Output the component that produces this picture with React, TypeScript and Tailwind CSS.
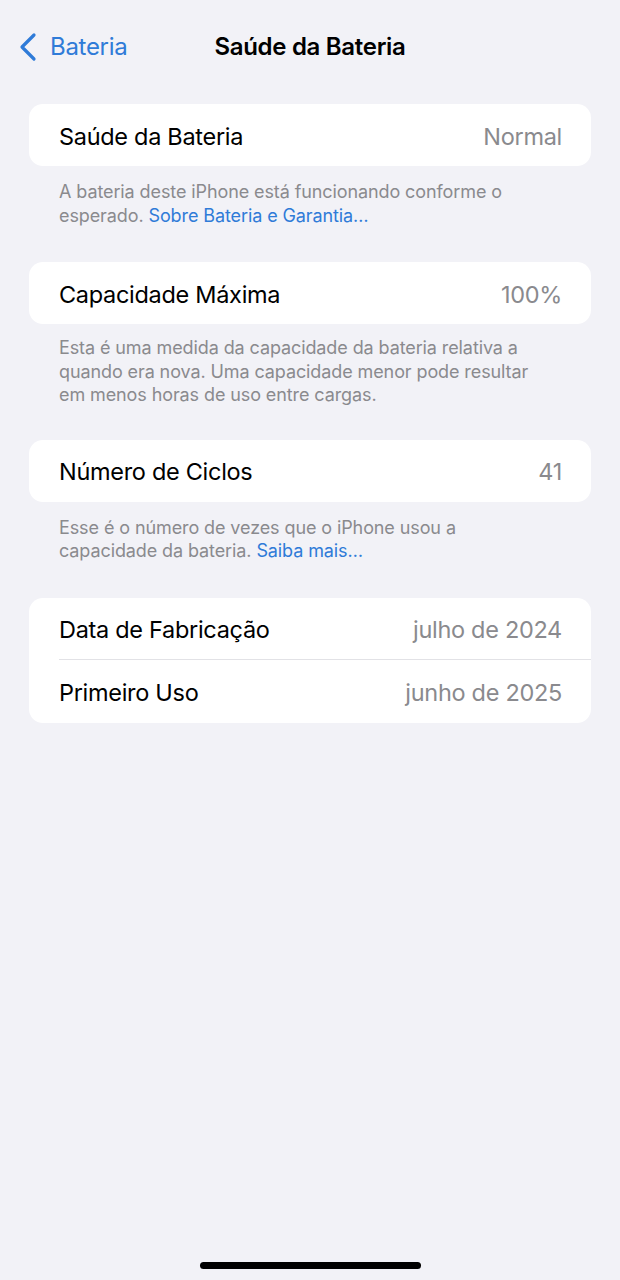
import React from "react";

const font = { fontFamily: "Inter, 'Noto Sans', 'Liberation Sans', sans-serif" };

function Row({ label, value, divider }: { label: string; value: string; divider?: boolean }) {
  return (
    <div className="relative flex h-[62px] items-center justify-between pl-[30px] pr-[29px] pt-[3px]">
      <span className="text-[23.5px] text-black tracking-[-0.3px]">{label}</span>
      <span className="text-[23.5px] text-[#8a8a8e] tracking-[-0.3px]">{value}</span>
      {divider && <div className="absolute bottom-0 left-[30px] right-0 h-px bg-[#e2e2e6]" />}
    </div>
  );
}

function Footer({ children, className }: { children: React.ReactNode; className: string }) {
  return (
    <p className={`pl-[30px] pr-[44px] text-[18px] leading-[23.5px] text-[#8a8a8e] tracking-[-0.1px] ${className}`}>
      {children}
    </p>
  );
}

export default function App() {
  return (
    <div className="relative flex h-[1280px] w-[620px] flex-col bg-[#f2f2f7]" style={font}>
      <div className="relative flex h-[94px] items-center">
        <div className="flex items-center pl-[18px] text-[#2f7bd8]">
          <svg width="20" height="30" viewBox="0 0 20 30" fill="none">
            <path d="M16 3 L4 15 L16 27" stroke="#2f7bd8" strokeWidth="3.2" strokeLinecap="round" strokeLinejoin="round" />
          </svg>
          <span className="ml-[12px] text-[24px] tracking-[-0.3px]">Bateria</span>
        </div>
        <div className="absolute left-0 right-0 text-center text-[24px] font-semibold text-black tracking-[-0.3px]">
          Saúde da Bateria
        </div>
      </div>

      <div className="px-[29px] pt-[10px]">
        <div className="rounded-[14px] bg-white">
          <Row label="Saúde da Bateria" value="Normal" />
        </div>
        <Footer className="mt-[14px]">
          A bateria deste iPhone está funcionando conforme o esperado.{" "}
          <span className="text-[#2f7bd8]">Sobre Bateria e Garantia…</span>
        </Footer>

        <div className="mt-[35px] rounded-[14px] bg-white">
          <Row label="Capacidade Máxima" value="100%" />
        </div>
        <Footer className="mt-[12px]">
          Esta é uma medida da capacidade da bateria relativa a quando era nova. Uma capacidade menor pode resultar em
          menos horas de uso entre cargas.
        </Footer>

        <div className="mt-[33px] rounded-[14px] bg-white">
          <Row label="Número de Ciclos" value="41" />
        </div>
        <Footer className="mt-[14px]">
          Esse é o número de vezes que o iPhone usou a capacidade da bateria.{" "}
          <span className="text-[#2f7bd8]">Saiba mais…</span>
        </Footer>

        <div className="mt-[35px] overflow-hidden rounded-[14px] bg-white">
          <Row label="Data de Fabricação" value="julho de 2024" divider />
          <div className="h-px" />
          <Row label="Primeiro Uso" value="junho de 2025" />
        </div>
      </div>

      <div className="absolute bottom-[11px] left-[200px] h-[7px] w-[221px] rounded-full bg-black" />
    </div>
  );
}
